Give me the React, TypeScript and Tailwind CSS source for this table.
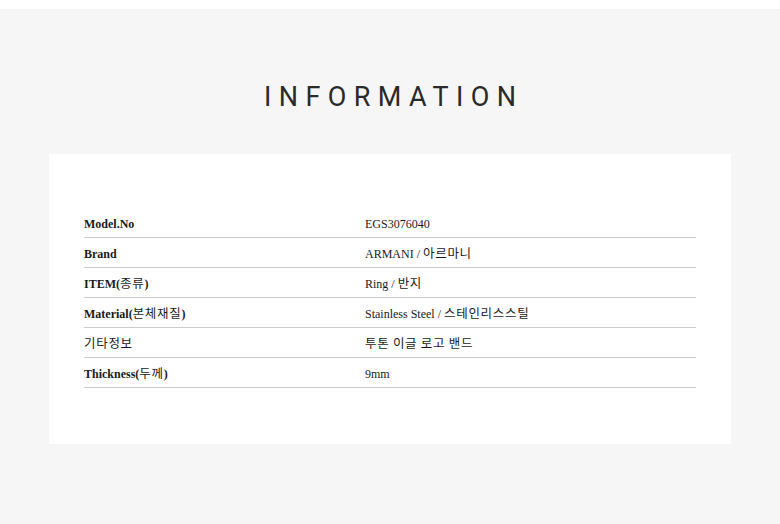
import React from 'react'

// ─── Product info rows ────────────────────────────────────────────────────────
const rows = [
  { label: 'Model.No', value: 'EGS3076040' },
  { label: 'Brand', value: 'ARMANI / 아르마니' },
  { label: 'ITEM(종류)', value: 'Ring / 반지' },
  { label: 'Material(본체재질)', value: 'Stainless Steel / 스테인리스스틸' },
  { label: '기타정보', value: '투톤 이글 로고 밴드' },
  { label: 'Thickness(두께)', value: '9mm' },
]

// Korean runs are set in a regular-weight CJK face, Latin in the serif
function Mixed({ text, bold }: { text: string; bold?: boolean }) {
  const parts = text.split(/([가-힣][가-힣 ]*[가-힣]|[가-힣])/g).filter(Boolean)
  return (
    <>
      {parts.map((p, i) =>
        /[가-힣]/.test(p) ? (
          <span
            key={i}
            className="font-normal text-[12.5px] tracking-[0.7px]"
            style={{ fontFamily: '"Noto Sans CJK KR", sans-serif' }}
          >
            {p}
          </span>
        ) : (
          <span key={i} className={bold ? 'font-bold' : 'font-normal'}>
            {p}
          </span>
        )
      )}
    </>
  )
}

export default function App() {
  return (
    <div className="w-[780px] h-[524px] bg-white">
      <div className="mt-[9px] h-[515px] bg-[#f6f6f6] flex flex-col items-center">
        {/* ── Title ── */}
        <h2
          className="mt-[71px] text-[27px] leading-[34px] tracking-[0.275em] pl-[0.275em] text-[#2a2a2a] font-normal"
          style={{ fontFamily: 'Roboto, sans-serif' }}
        >
          INFORMATION
        </h2>

        {/* ── Info card ── */}
        <div className="mt-[40px] w-[682px] bg-white pt-[54px] pb-[56px] px-[35px]">
          <div className="flex flex-col">
            {rows.map((r) => (
              <div
                key={r.label}
                className="flex h-[30px] items-center pt-[2px] border-b border-[#cbcbcb] text-[12px] text-[#1a1a1a]"
                style={{ fontFamily: '"Liberation Serif", "Noto Sans CJK KR", serif' }}
              >
                <div className="w-[281px]">
                  <Mixed text={r.label} bold />
                </div>
                <div className="flex-1">
                  <Mixed text={r.value} />
                </div>
              </div>
            ))}
          </div>
        </div>
      </div>
    </div>
  )
}
